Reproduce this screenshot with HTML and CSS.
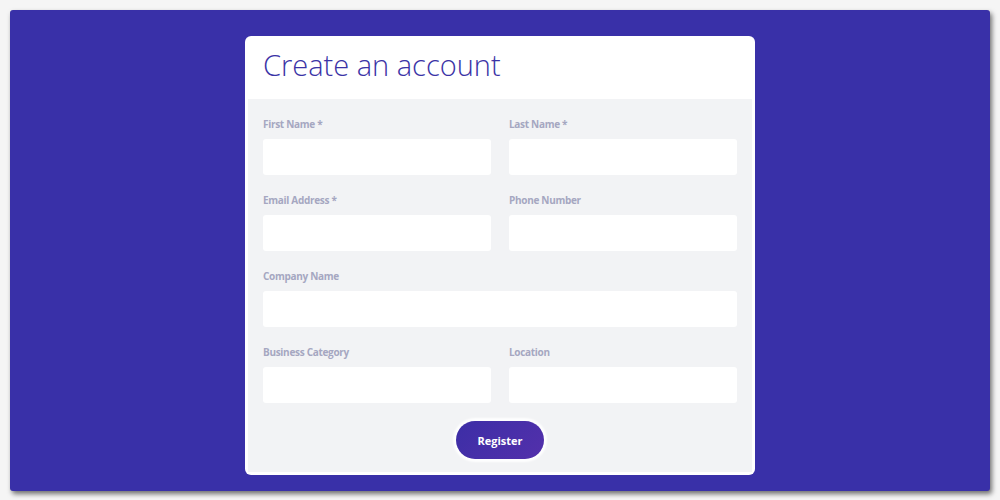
FILE: index.html
```html
<!DOCTYPE html>
<html lang="en">
<head>
    <meta charset="UTF-8">
    <meta name="viewport" content="width=device-width, initial-scale=1.0">
    <title>Create an account</title>
    <link rel="stylesheet" href="styles.css">
</head>
<body>
    <div class="frame">
        <!-- Registration card -->
        <div class="card">
            <div class="card-header">
                <h1>Create an account</h1>
            </div>
            <form class="card-body" onsubmit="return false;">
                <div class="fields">
                    <div class="field">
                        <label for="firstName">First Name *</label>
                        <input type="text" id="firstName">
                    </div>
                    <div class="field">
                        <label for="lastName">Last Name *</label>
                        <input type="text" id="lastName">
                    </div>
                    <div class="field">
                        <label for="email">Email Address *</label>
                        <input type="email" id="email">
                    </div>
                    <div class="field">
                        <label for="phone">Phone Number</label>
                        <input type="tel" id="phone">
                    </div>
                    <div class="field wide">
                        <label for="company">Company Name</label>
                        <input type="text" id="company">
                    </div>
                    <div class="field">
                        <label for="category">Business Category</label>
                        <input type="text" id="category">
                    </div>
                    <div class="field">
                        <label for="location">Location</label>
                        <input type="text" id="location">
                    </div>
                </div>
                <div class="actions">
                    <button type="submit" class="register-button">Register</button>
                </div>
            </form>
        </div>
    </div>
</body>
</html>
```

FILE: styles.css
```css
/* Page background */
body {
    margin: 0;
    background: #f5f5f5;
    font-family: "Open Sans", Arial, sans-serif;
}

/* Purple panel that holds the card */
.frame {
    margin: 10px;
    height: 481px;
    background-color: #3930a8;
    border-radius: 3px;
    box-shadow: 2px 3px 5px rgba(0, 0, 0, 0.55);
    display: flex;
    justify-content: center;
    align-items: flex-start;
    padding-top: 26px;
    box-sizing: border-box;
}

/* Card */
.card {
    width: 510px;
    background-color: #ffffff;
    border-radius: 6px;
    padding: 0 3px 3px;
    box-sizing: border-box;
}

.card-header {
    height: 63px;
    padding: 0 15px;
    display: flex;
    align-items: center;
}

.card-header h1 {
    margin: 0;
    font-size: 29px;
    font-weight: 300;
    color: #3b33a6;
    padding-bottom: 7px;
}

/* Form area */
.card-body {
    background-color: #f2f3f5;
    padding: 18px 15px 13px;
}

.fields {
    display: grid;
    grid-template-columns: 1fr 1fr;
    column-gap: 18px;
    row-gap: 18px;
}

.field {
    display: flex;
    flex-direction: column;
}

.field.wide {
    grid-column: 1 / 3;
}

label {
    font-size: 10px;
    font-weight: 700;
    line-height: 14px;
    color: #a5a7c1;
    margin-bottom: 8px;
    letter-spacing: -0.3px;
}

input {
    height: 36px;
    border: none;
    border-radius: 3px;
    background-color: #ffffff;
    padding: 0 10px;
    box-sizing: border-box;
    font-family: inherit;
    font-size: 13px;
    outline: none;
}

/* Register button */
.actions {
    display: flex;
    justify-content: center;
    margin-top: 18px;
}

.register-button {
    width: 88px;
    height: 38px;
    border: none;
    border-radius: 19px;
    background: linear-gradient(135deg, #3c2ea6, #5330ab);
    color: #ffffff;
    font-family: inherit;
    font-size: 11px;
    font-weight: 700;
    cursor: pointer;
    box-shadow: 0 0 2px 3px rgba(255, 255, 255, 0.9);
}
```
